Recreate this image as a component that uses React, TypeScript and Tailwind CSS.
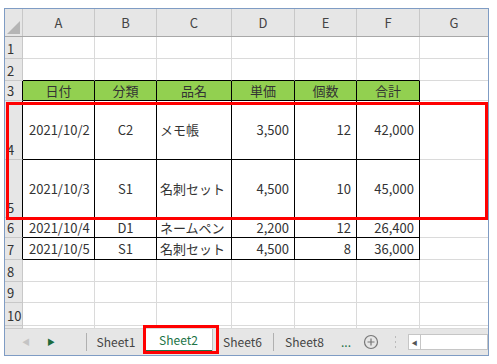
const cols = [
  { key: "A", w: "w-[72px]" },
  { key: "B", w: "w-[62px]" },
  { key: "C", w: "w-[75px]" },
  { key: "D", w: "w-[63px]" },
  { key: "E", w: "w-[62px]" },
  { key: "F", w: "w-[63px]" },
  { key: "G", w: "flex-1" },
];

type Row = { n: string; h: string; cells?: string[]; head?: boolean };

const rows: Row[] = [
  { n: "1", h: "h-[22px]" },
  { n: "2", h: "h-[22px]" },
  { n: "3", h: "h-[20px]", head: true, cells: ["日付", "分類", "品名", "単価", "個数", "合計"] },
  { n: "4", h: "h-[59px]", cells: ["2021/10/2", "C2", "メモ帳", "3,500", "12", "42,000"] },
  { n: "5", h: "h-[58px]", cells: ["2021/10/3", "S1", "名刺セット", "4,500", "10", "45,000"] },
  { n: "6", h: "h-[20px]", cells: ["2021/10/4", "D1", "ネームペン", "2,200", "12", "26,400"] },
  { n: "7", h: "h-[22px]", cells: ["2021/10/5", "S1", "名刺セット", "4,500", "8", "36,000"] },
  { n: "8", h: "h-[22px]" },
  { n: "9", h: "h-[21px]" },
  { n: "10", h: "h-[23px]" },
  { n: "", h: "h-[3px]" },
];

// alignment per column: date left, code centered, name left, numbers right
const align = ["justify-start pl-[6px]", "justify-center", "justify-start pl-[3px]", "justify-end pr-[5px]", "justify-end pr-[5px]", "justify-end pr-[5px]", ""];

export default function App() {
  return (
    <div
      className="relative w-[497px] h-[364px] bg-white text-[#333] overflow-hidden"
      style={{ fontFamily: '"Noto Sans CJK JP", "Noto Sans", sans-serif' }}
    >
      <div className="absolute left-[4px] top-[8px] w-[485px] h-[348px] border border-[#7f9cc4] flex flex-col bg-white">
        {/* column headers */}
        <div className="flex h-[28px] bg-[#e6e6e6] border-b border-[#a8a8a8]">
          <div className="relative w-[18px] border-r border-[#c8c8c8]">
            <div className="absolute right-[2px] bottom-[2px] w-0 h-0 border-l-[13px] border-l-transparent border-b-[13px] border-b-[#b5b5b5]" />
          </div>
          {cols.map((c) => (
            <div
              key={c.key}
              className={`${c.w} flex items-center justify-center text-[13px] text-[#444] border-r border-[#c8c8c8] last:border-r-0`}
            >
              {c.key}
            </div>
          ))}
        </div>

        {/* rows */}
        {rows.map((r, ri) => {
          const inTable = !!r.cells;
          const nextInTable = !!rows[ri + 1]?.cells;
          return (
            <div key={ri} className={`flex ${r.h}`}>
              <div
                className={`w-[18px] bg-[#e6e6e6] flex items-end pl-[2px] text-[13px] leading-[18px] text-[#333] border-b border-r ${
                  inTable ? "border-r-black border-b-[#c8c8c8]" : "border-[#c8c8c8]"
                }`}
              >
                {r.n}
              </div>
              {cols.map((c, ci) => {
                const tableCol = ci < 6;
                const cellIn = inTable && tableCol;
                const nextIsTable = inTable && ci + 1 < 6;
                const rb = cellIn || nextIsTable ? "border-r-black" : "border-r-[#dadada]";
                const bb = cellIn || (nextInTable && tableCol) ? "border-b-black" : "border-b-[#dadada]";
                return (
                  <div
                    key={c.key}
                    className={`${c.w} flex items-center text-[13px] border-r border-b ${rb} ${bb} ${
                      cellIn && r.head ? "bg-[#92d050] justify-center text-[#333]" : align[ci]
                    } last:border-r-0`}
                  >
                    {cellIn ? r.cells![ci] : ""}
                  </div>
                );
              })}
            </div>
          );
        })}

        {/* sheet tabs */}
        <div className="flex-1 flex items-stretch bg-[#e6e6e6] text-[12px] text-[#444]">
          <div className="w-[81px] flex items-center">
            <span className="ml-[17px] text-[8px] text-[#c4c4c4]">◀</span>
            <span className="ml-[17px] text-[8px] text-[#1e6b3c]">▶</span>
          </div>
          <div className="w-px my-[4px] bg-[#b0b0b0]" />
          <div className="w-[58px] flex items-center justify-center">Sheet1</div>
          <div className="w-[67px] mb-[3px] bg-white border-b-2 border-[#217346] flex items-center justify-center text-[#217346] shadow-[1px_0_0_#c0c0c0,-1px_0_0_#c0c0c0]">
            Sheet2
          </div>
          <div className="w-[61px] flex items-center justify-center">Sheet6</div>
          <div className="w-px my-[4px] bg-[#b0b0b0]" />
          <div className="w-[61px] flex items-center justify-center">Sheet8</div>
          <div className="w-[22px] flex items-center justify-center text-[#217346]">...</div>
          <div className="w-[28px] flex items-center justify-center">
            <svg width="16" height="16" viewBox="0 0 16 16" fill="none" stroke="#777" strokeWidth="1.2">
              <circle cx="8" cy="8" r="6.5" />
              <path d="M8 4.5v7M4.5 8h7" />
            </svg>
          </div>
          <div className="w-[20px] flex items-center justify-center">
            <svg width="3" height="12" viewBox="0 0 3 12" fill="#bbb">
              <rect x="1" y="0" width="1" height="2" />
              <rect x="1" y="5" width="1" height="2" />
              <rect x="1" y="10" width="1" height="2" />
            </svg>
          </div>
          <div className="flex-1 flex items-center">
            <div className="flex-1 h-[16px] ml-[3px] bg-white border border-[#c6c6c6] flex items-center">
              <div className="w-[12px] h-full border-r border-[#c6c6c6] flex items-center justify-center">
                <span className="text-[6px] text-[#555]">◀</span>
              </div>
            </div>
          </div>
        </div>
      </div>

      {/* highlight boxes */}
      <div className="absolute left-[6px] top-[102px] w-[482px] h-[118px] border-[3px] border-[#ff0000]" />
      <div className="absolute left-[143px] top-[325px] w-[76px] h-[29px] border-[3px] border-[#ff0000]" />
    </div>
  );
}
